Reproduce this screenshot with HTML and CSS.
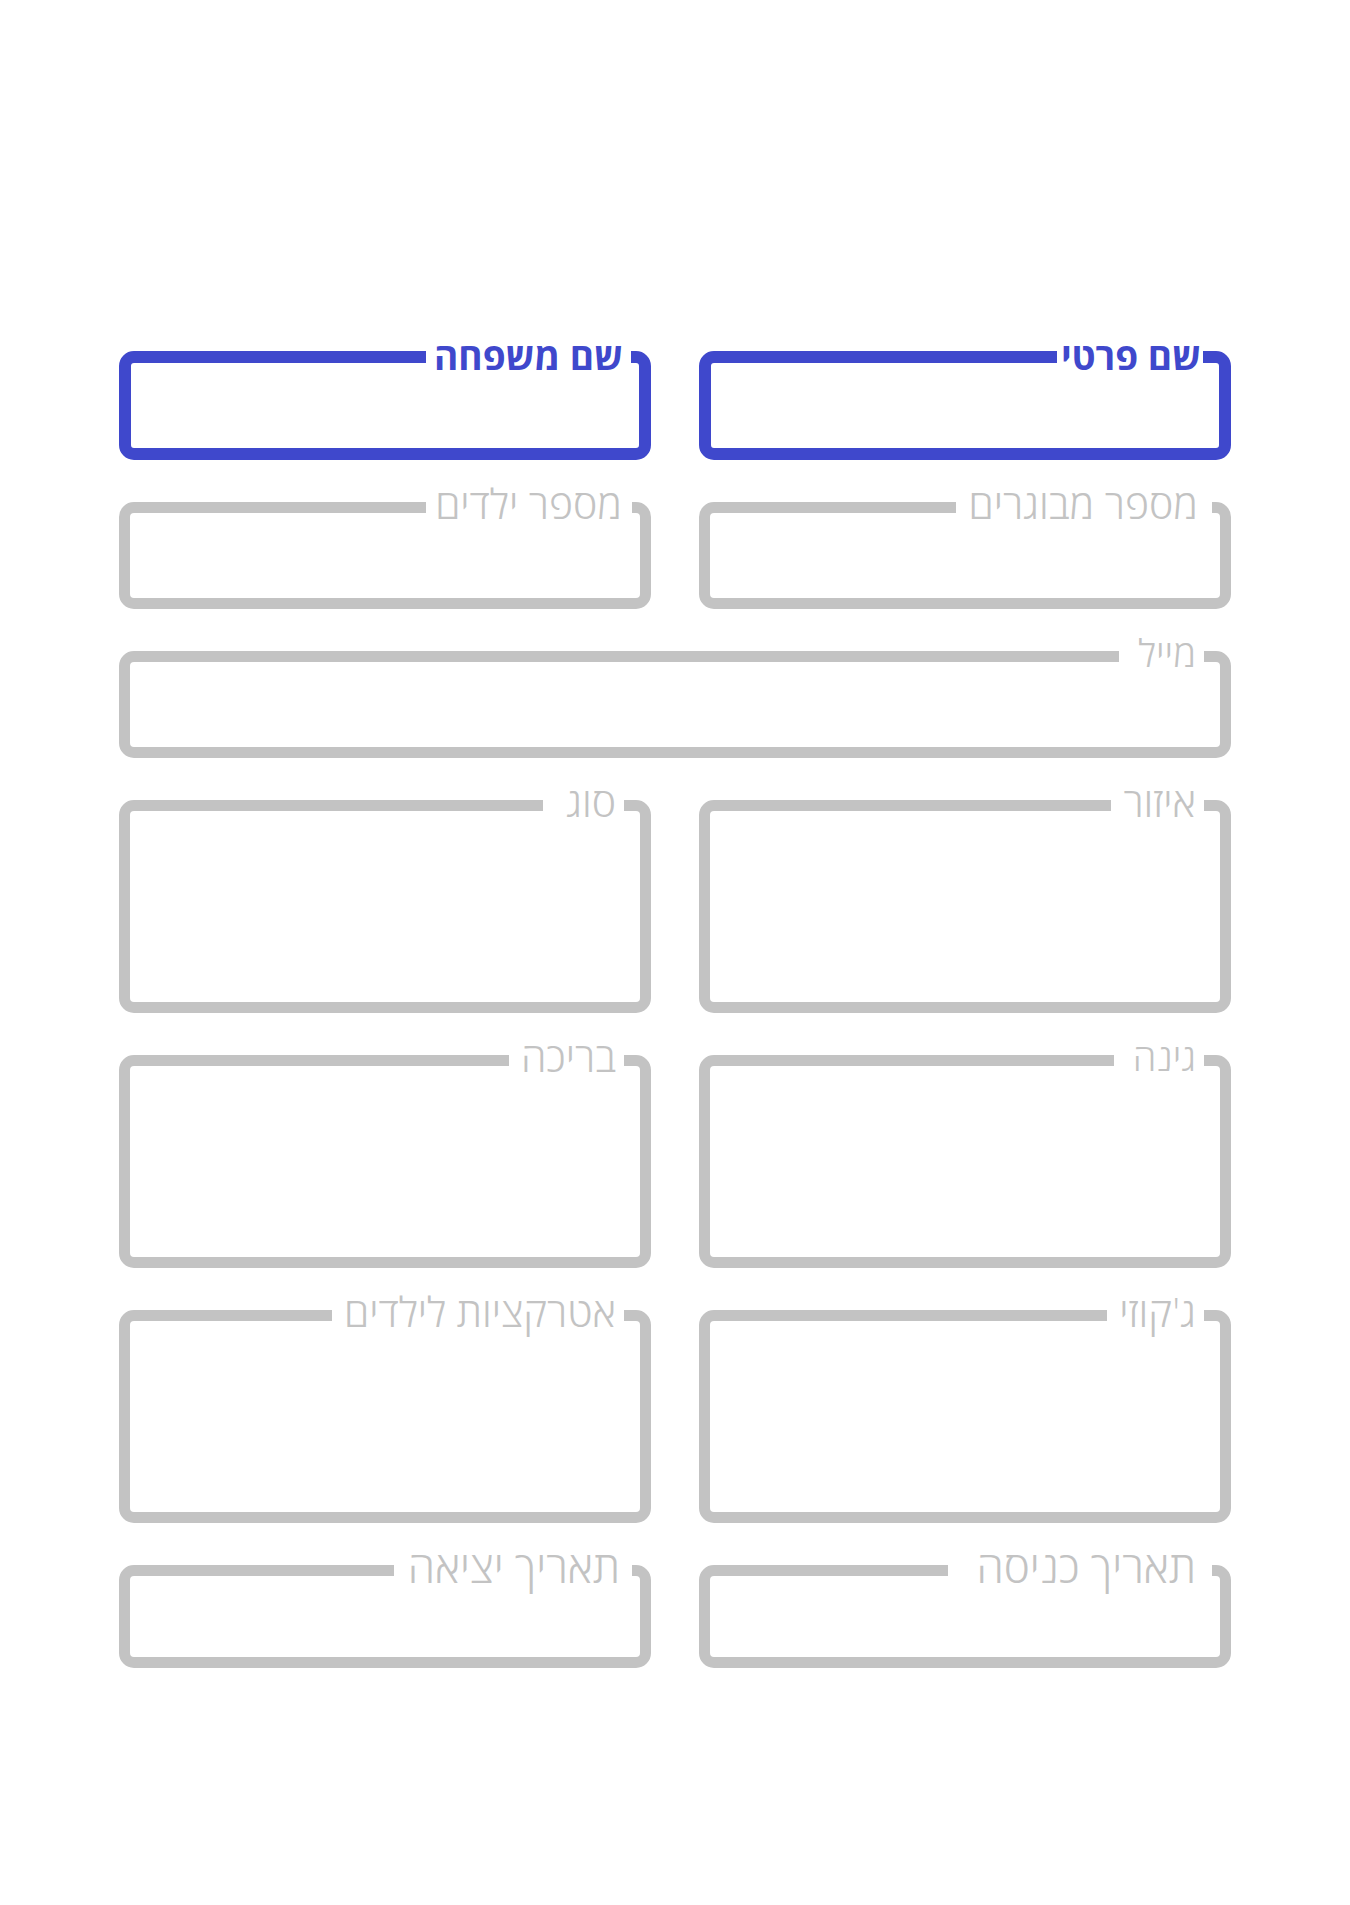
FILE: index.html
```html
<!DOCTYPE html>
<html lang="he" dir="rtl">
<head>
<meta charset="utf-8">
<title>טופס הזמנה</title>
<link rel="stylesheet" href="styles.css">
</head>
<body>
<form class="form">
  <fieldset class="field field--active"><legend class="label label--first-name">שם פרטי</legend><input class="input" type="text"></fieldset>
  <fieldset class="field field--active"><legend class="label label--near label--last-name">שם משפחה</legend><input class="input" type="text"></fieldset>
  <fieldset class="field"><legend class="label label--near label--adults">מספר מבוגרים</legend><input class="input" type="text"></fieldset>
  <fieldset class="field"><legend class="label label--near label--kids">מספר ילדים</legend><input class="input" type="text"></fieldset>
  <fieldset class="field field--wide"><legend class="label label--sm label--loose">מייל</legend><input class="input" type="text"></fieldset>
  <fieldset class="field field--tall"><legend class="label">איזור</legend><input class="input" type="text"></fieldset>
  <fieldset class="field field--tall"><legend class="label label--wider">סוג</legend><input class="input" type="text"></fieldset>
  <fieldset class="field field--tall"><legend class="label label--sm label--loose">גינה</legend><input class="input" type="text"></fieldset>
  <fieldset class="field field--tall"><legend class="label">בריכה</legend><input class="input" type="text"></fieldset>
  <fieldset class="field field--tall"><legend class="label">ג'קוזי</legend><input class="input" type="text"></fieldset>
  <fieldset class="field field--tall"><legend class="label">אטרקציות לילדים</legend><input class="input" type="text"></fieldset>
  <fieldset class="field field--compact"><legend class="label label--lg label--near label--check-in">תאריך כניסה</legend><input class="input" type="text"></fieldset>
  <fieldset class="field field--compact"><legend class="label label--lg label--near label--check-out">תאריך יציאה</legend><input class="input" type="text"></fieldset>
</form>
</body>
</html>
```

FILE: styles.css
```css
html, body {
  margin: 0;
  background: #ffffff;
}

body {
  font-family: "Open Sans", "DejaVu Sans", sans-serif;
}

.form {
  width: 1112px;
  margin: 0 auto;
  padding-top: 337px;
  display: grid;
  grid-template-columns: 1fr 1fr;
  column-gap: 48px;
  row-gap: 27px;
}

.field {
  margin: 0;
  min-width: 0;
  padding: 0 8px;
  border: 11px solid #c3c3c3;
  border-radius: 15px;
}

.field--wide {
  grid-column: 1 / -1;
}

/* legend: 40px tall overall, text line raised slightly to sit centred on the border */
.label {
  margin-inline-start: 8px;
  padding-block: 0 8px;
  padding-inline: 8px 12px;
  line-height: 32px;
  font-size: 41px;
  font-weight: 300;
  color: #c3c3c3;
  white-space: nowrap;
}

.label--sm {
  font-size: 38px;
}

.label--lg {
  font-size: 44px;
}

.label--near {
  margin-inline-start: 0;
}

.label--loose {
  padding-inline-end: 19px;
}

.label--wider {
  padding-inline-end: 23px;
}

.label--kids {
  padding-inline: 10px 9px;
}

.label--adults {
  padding-inline: 14px 12px;
}

.label--check-in {
  padding-inline: 16px 28px;
}

.label--check-out {
  padding-inline: 12px 14px;
}

.field--active {
  border-color: #3f48cc;
  border-width: 12px;
}

.field--active .label {
  color: #3f48cc;
  font-weight: 700;
  font-size: 37px;
  line-height: 38px;
  padding-block: 0 2px;
}

.field--active .label--first-name {
  padding-inline: 2px 4px;
}

.field--active .label--last-name {
  padding-inline: 8px 8px;
}

.input {
  display: block;
  width: 100%;
  height: 71px;
  margin: 0;
  padding: 0;
  border: 0;
  outline: none;
  background: transparent;
  box-sizing: border-box;
}

.field--tall .input {
  height: 177px;
}

.field--compact .input {
  height: 67px;
}
```
